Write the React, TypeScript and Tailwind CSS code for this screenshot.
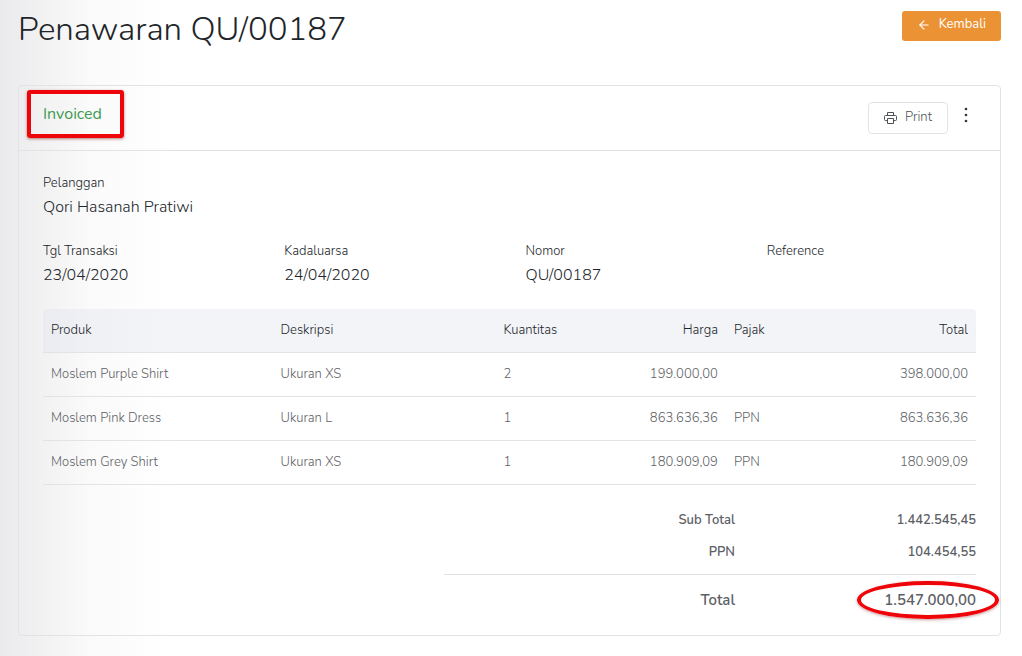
import { LuArrowLeft } from "react-icons/lu";

const details = [
  { label: "Tgl Transaksi", value: "23/04/2020" },
  { label: "Kadaluarsa", value: "24/04/2020" },
  { label: "Nomor", value: "QU/00187" },
  { label: "Reference", value: "" },
];

const items = [
  { product: "Moslem Purple Shirt", description: "Ukuran XS", qty: "2", price: "199.000,00", tax: "", total: "398.000,00" },
  { product: "Moslem Pink Dress", description: "Ukuran L", qty: "1", price: "863.636,36", tax: "PPN", total: "863.636,36" },
  { product: "Moslem Grey Shirt", description: "Ukuran XS", qty: "1", price: "180.909,09", tax: "PPN", total: "180.909,09" },
];

function PrinterIcon() {
  return (
    <svg width="13" height="13" viewBox="0 0 13 13" fill="none" stroke="currentColor" aria-hidden="true">
      <path d="M3.5 3.500V.500h6v3" />
      <path d="M3.500 8.500h-2a1 1 0 0 1-1-1v-3a1 1 0 0 1 1-1h10a1 1 0 0 1 1 1v3a1 1 0 0 1-1 1h-2" />
      <path d="M3.500 6.500h6v5h-6z" />
    </svg>
  );
}

function DotsIcon() {
  return (
    <svg width="20" height="20" viewBox="0 0 20 20" fill="currentColor" aria-hidden="true">
      <circle cx="10" cy="4" r="1.3" />
      <circle cx="10" cy="10" r="1.3" />
      <circle cx="10" cy="16" r="1.3" />
    </svg>
  );
}

function Field({ label, value }: { label: string; value: string }) {
  return (
    <div>
      <dt className="text-[13px] leading-6">{label}</dt>
      <dd className="text-base leading-6">{value}</dd>
    </div>
  );
}

function ItemsTable() {
  return (
    <table className="mt-[22px] w-full table-fixed text-left text-[13px] leading-5 text-[#5d6166]">
      <thead>
        <tr className="border-b border-[#e2e3e5] bg-[#dfe3ed]/40 text-[#212529]">
          <th className="w-[24.6%] rounded-tl px-2 pt-[11px] pb-3 font-light">Produk</th>
          <th className="w-[23.9%] px-2 pt-[11px] pb-3 font-light">Deskripsi</th>
          <th className="w-[12%] px-2 pt-[11px] pb-3 font-light">Kuantitas</th>
          <th className="w-[12.7%] px-2 pt-[11px] pb-3 text-right font-light">Harga</th>
          <th className="w-[12%] px-2 pt-[11px] pb-3 font-light">Pajak</th>
          <th className="rounded-tr px-2 pt-[11px] pb-3 text-right font-light">Total</th>
        </tr>
      </thead>
      <tbody>
        {items.map((item) => (
          <tr key={item.product} className="border-b border-[#e2e3e5]">
            <td className="px-2 pt-[11px] pb-3">{item.product}</td>
            <td className="px-2 pt-[11px] pb-3">{item.description}</td>
            <td className="px-2 pt-[11px] pb-3">{item.qty}</td>
            <td className="px-2 pt-[11px] pb-3 text-right">{item.price}</td>
            <td className="px-2 pt-[11px] pb-3">{item.tax}</td>
            <td className="px-2 pt-[11px] pb-3 text-right">{item.total}</td>
          </tr>
        ))}
      </tbody>
    </table>
  );
}

export default function App() {
  return (
    <div className="min-h-screen bg-white bg-linear-to-r from-[#eaeaec] from-0% via-[#fafafa] via-[90px] to-white to-[170px] pt-[11px] pr-[21px] pb-5 pl-[18px] font-['Nunito','Open_Sans',sans-serif] font-light text-[#212529]">
      <header className="flex items-start justify-between">
        <h1 className="text-[33px] leading-[38px]">Penawaran QU/00187</h1>
        <button type="button" className="flex h-[30px] items-center gap-2 rounded-[3px] bg-[#eb9234] px-[15px] pb-0.5 text-[13px] font-normal text-white">
          <LuArrowLeft size={14} strokeWidth={2} aria-hidden="true" />
          Kembali
        </button>
      </header>

      <main className="mt-9 rounded-sm border border-[#e2e3e5]">
        <div className="flex h-[65px] items-center justify-between border-b border-[#e2e3e5] px-6">
          <div className="relative pb-2 text-base leading-6 font-normal text-[#3c9a50]">
            Invoiced
            <span className="absolute -top-3 -right-[22px] -bottom-1 -left-4 rounded-[3px] border-4 border-[#ee0509] shadow-[0_1px_3px_rgba(120,0,0,0.5)]" />
          </div>
          <div className="flex items-center gap-2">
            <button type="button" className="flex h-8 items-center gap-2 rounded border border-[#e2e3e5] bg-white px-[15px] text-[13px] text-[#4d5257]">
              <PrinterIcon />
              Print
            </button>
            <button type="button" aria-label="Menu" className="pb-[7px] text-[#33373b]">
              <DotsIcon />
            </button>
          </div>
        </div>

        <div className="px-6 pt-5 pb-2.5">
          <dl>
            <Field label="Pelanggan" value="Qori Hasanah Pratiwi" />
          </dl>
          <dl className="mt-5 grid grid-cols-4 gap-8">
            {details.map((d) => (
              <Field key={d.label} label={d.label} value={d.value} />
            ))}
          </dl>

          <ItemsTable />

          <dl className="mt-5 ml-auto w-[57%] text-[13px] font-semibold text-[#5d6166]">
            <div className="flex h-8 items-center text-right">
              <dt className="flex-1">Sub Total</dt>
              <dd className="w-[241px]">1.442.545,45</dd>
            </div>
            <div className="flex h-8 items-center text-right">
              <dt className="flex-1">PPN</dt>
              <dd className="w-[241px]">104.454,55</dd>
            </div>
            <div className="mt-[5px] flex h-[51px] items-center border-t border-[#e2e3e5] text-right text-[15px]">
              <dt className="flex-1">Total</dt>
              <dd className="flex w-[241px] justify-end">
                <span className="relative">
                  1.547.000,00
                  <span className="absolute -inset-y-2 -right-[23px] -left-[27px] rounded-[50%] border-4 border-[#ee0509] shadow-[0_1px_3px_rgba(120,0,0,0.4)]" />
                </span>
              </dd>
            </div>
          </dl>
        </div>
      </main>
    </div>
  );
}
